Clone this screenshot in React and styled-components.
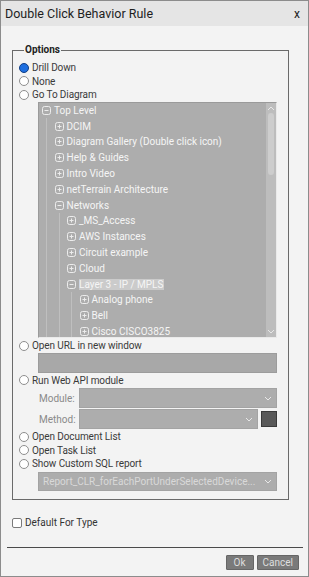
import React from 'react'
import styled, { createGlobalStyle } from 'styled-components'

const GlobalStyle = createGlobalStyle`
  html, body {
    margin: 0;
    padding: 0;
    background: #f3f3f3;
  }
  * {
    box-sizing: border-box;
  }
`

const tree = [
  { label: 'Top Level', level: 0, open: true },
  { label: 'DCIM', level: 1 },
  { label: 'Diagram Gallery (Double click icon)', level: 1 },
  { label: 'Help & Guides', level: 1 },
  { label: 'Intro Video', level: 1 },
  { label: 'netTerrain Architecture', level: 1 },
  { label: 'Networks', level: 1, open: true },
  { label: '_MS_Access', level: 2 },
  { label: 'AWS Instances', level: 2 },
  { label: 'Circuit example', level: 2 },
  { label: 'Cloud', level: 2 },
  { label: 'Layer 3 - IP / MPLS', level: 2, open: true, selected: true },
  { label: 'Analog phone', level: 3 },
  { label: 'Bell', level: 3 },
  { label: 'Cisco CISCO3825', level: 3 },
]

function Chevron({ up }) {
  return (
    <svg width="8" height="5" viewBox="0 0 8 5">
      <path
        d={up ? 'M1 4 L4 1 L7 4' : 'M1 1 L4 4 L7 1'}
        fill="none"
        stroke="#e8e8e8"
        strokeWidth="1"
      />
    </svg>
  )
}

function Expander({ open }) {
  return (
    <svg width="9" height="9" viewBox="0 0 9 9">
      <rect x="0.5" y="0.5" width="8" height="8" rx="2" fill="none" stroke="#ececec" />
      <path d="M2.5 4.5 H6.5" stroke="#ececec" />
      {!open && <path d="M4.5 2.5 V6.5" stroke="#ececec" />}
    </svg>
  )
}

export default function App() {
  return (
    <>
      <GlobalStyle />
      <Dialog>
        <TitleBar>
          <Title>Double Click Behavior Rule</Title>
          <Close>x</Close>
        </TitleBar>

        <Content>
          <Options>
            <Legend>Options</Legend>

            <RadioRow>
              <Radio checked />
              Drill Down
            </RadioRow>
            <RadioRow>
              <Radio />
              None
            </RadioRow>
            <RadioRow>
              <Radio />
              Go To Diagram
            </RadioRow>

            <TreeBox>
              <TreeList>
                {tree.map((item) => (
                  <TreeItem key={item.label} level={item.level}>
                    <Expander open={item.open} />
                    <TreeLabel selected={item.selected}>{item.label}</TreeLabel>
                  </TreeItem>
                ))}
              </TreeList>
              <ScrollBar>
                <Chevron up />
                <Thumb />
                <Chevron />
              </ScrollBar>
            </TreeBox>

            <RadioRow gap={1.5}>
              <Radio />
              Open URL in new window
            </RadioRow>
            <UrlInput />

            <RadioRow>
              <Radio />
              Run Web API module
            </RadioRow>
            <FieldRow>
              <FieldLabel>Module:</FieldLabel>
              <Select>
                <Chevron />
              </Select>
            </FieldRow>
            <FieldRow>
              <FieldLabel>Method:</FieldLabel>
              <Select>
                <Chevron />
              </Select>
              <DarkButton />
            </FieldRow>

            <RadioRow>
              <Radio />
              Open Document List
            </RadioRow>
            <RadioRow>
              <Radio />
              Open Task List
            </RadioRow>
            <RadioRow>
              <Radio />
              Show Custom SQL report
            </RadioRow>
            <ReportSelect>
              <SelectText>Report_CLR_forEachPortUnderSelectedDevice...</SelectText>
              <Chevron />
            </ReportSelect>
          </Options>

          <CheckRow>
            <CheckBox />
            Default For Type
          </CheckRow>
        </Content>

        <Footer>
          <Button>Ok</Button>
          <Button>Cancel</Button>
        </Footer>
      </Dialog>
    </>
  )
}

const Dialog = styled.div`
  width: 309px;
  height: 577px;
  border: 1px solid #8c8c8c;
  background: #f3f3f3;
  display: flex;
  flex-direction: column;
  font-family: Roboto, 'Liberation Sans', sans-serif;
  color: #333;
`

const TitleBar = styled.div`
  height: 25px;
  background: #e5e5e5;
  display: flex;
  align-items: center;
  justify-content: space-between;
  padding: 0 8px 0 4px;
  flex-shrink: 0;
`

const Title = styled.div`
  font-size: 12.5px;
  color: #1e1e1e;
`

const Close = styled.div`
  font-size: 12px;
  color: #222;
  margin-top: 1px;
`

const Content = styled.div`
  flex: 1;
  padding: 18px 19px 0 11px;
`

const Options = styled.fieldset`
  margin: 0;
  padding: 5px 11px 8px 6px;
  border: 1px solid #6a6a6a;
  min-width: 0;
`

const Legend = styled.legend`
  font-size: 10px;
  font-weight: bold;
  color: #222;
  padding: 0 1px;
  margin-left: 5px;
  line-height: 12px;
`

const RadioRow = styled.div`
  height: 13.5px;
  margin-top: ${(p) => p.gap || 0}px;
  display: flex;
  align-items: center;
  gap: 3px;
  font-size: 10px;
  letter-spacing: -0.1px;
  color: #3a3a3a;
  white-space: nowrap;
`

const Radio = styled.span`
  width: 10px;
  height: 10px;
  border-radius: 50%;
  flex-shrink: 0;
  border: 1px solid ${(p) => (p.checked ? '#123f85' : '#8e8e8e')};
  background: ${(p) => (p.checked ? '#1f6fe0' : '#fff')};
`

const TreeBox = styled.div`
  margin: 0 0 0 19px;
  height: 236px;
  border: 1px solid #eaeaea;
  border-top-color: #9a9a9a;
  border-left-color: #9a9a9a;
  background: #adadad;
  display: flex;
  overflow: hidden;
`

const TreeList = styled.div`
  flex: 1;
  overflow: hidden;
`

const guide = (level) => {
  const lines = []
  for (let l = 0; l < level; l++) {
    const x = 3 + l * 12.5 + 4
    lines.push(
      `linear-gradient(rgba(255,255,255,0.22), rgba(255,255,255,0.22)) ${x}px 0 / 1px 100% no-repeat`
    )
  }
  return lines.length ? lines.join(', ') : 'none'
}

const TreeItem = styled.div`
  height: 15.8px;
  display: flex;
  align-items: center;
  gap: 3px;
  padding-left: ${(p) => 3 + p.level * 12.5}px;
  background: ${(p) => guide(p.level)};
  white-space: nowrap;

  svg {
    flex-shrink: 0;
  }
`

const TreeLabel = styled.span`
  font-size: 10px;
  color: #f5f5f5;
  line-height: 11px;
  padding: 0 1px 0 0;
  background: ${(p) => (p.selected ? '#cbcbcb' : 'transparent')};
`

const ScrollBar = styled.div`
  width: 10px;
  flex-shrink: 0;
  background: #bdbdbd;
  display: flex;
  flex-direction: column;
  align-items: center;
  justify-content: space-between;
  padding: 3px 0;
`

const Thumb = styled.div`
  width: 6px;
  flex: 0 0 62px;
  margin-bottom: auto;
  margin-top: 2px;
  border-radius: 3px;
  background: #cdcdcd;
`

const UrlInput = styled.div`
  margin: 0 0 1px 19px;
  height: 20px;
  background: #a8a8a8;
  border: 1px solid #9c9c9c;
`

const FieldRow = styled.div`
  margin: 1px 0 1px 20px;
  height: 20px;
  display: flex;
  align-items: center;
  gap: 3px;
`

const FieldLabel = styled.span`
  width: 37px;
  font-size: 10px;
  color: #8a8a8a;
  flex-shrink: 0;
`

const Select = styled.div`
  flex: 1;
  height: 20px;
  background: #adadad;
  border: 1px solid #a3a3a3;
  display: flex;
  align-items: center;
  justify-content: flex-end;
  padding-right: 4px;
`

const DarkButton = styled.div`
  width: 16px;
  height: 16px;
  background: #595959;
  border: 1px solid #3b3b3b;
  flex-shrink: 0;
`

const ReportSelect = styled.div`
  margin: 1px 0 0 19px;
  height: 19px;
  background: #adadad;
  border: 1px solid #a3a3a3;
  display: flex;
  align-items: center;
  gap: 4px;
  padding: 0 4px;
`

const SelectText = styled.span`
  flex: 1;
  min-width: 0;
  font-size: 10px;
  line-height: 13px;
  color: #d9d9d9;
  white-space: nowrap;
`

const CheckRow = styled.div`
  margin-top: 17px;
  height: 12px;
  display: flex;
  align-items: center;
  gap: 3px;
  font-size: 10px;
  color: #333;
`

const CheckBox = styled.span`
  width: 10px;
  height: 10px;
  border: 1px solid #7a7a7a;
  border-radius: 2px;
  background: #fff;
`

const Footer = styled.div`
  margin: 0 5px 0 6px;
  border-top: 1px solid #4a4a4a;
  padding: 7px 4px 6px 0;
  display: flex;
  justify-content: flex-end;
  gap: 3px;
`

const Button = styled.button`
  height: 15px;
  padding: 0 5px;
  min-width: 28px;
  border: 1px solid #666;
  border-radius: 1px;
  background: #7a7a7a;
  color: #dedede;
  font-family: Roboto, 'Liberation Sans', sans-serif;
  font-size: 10px;
  line-height: 13px;
`
